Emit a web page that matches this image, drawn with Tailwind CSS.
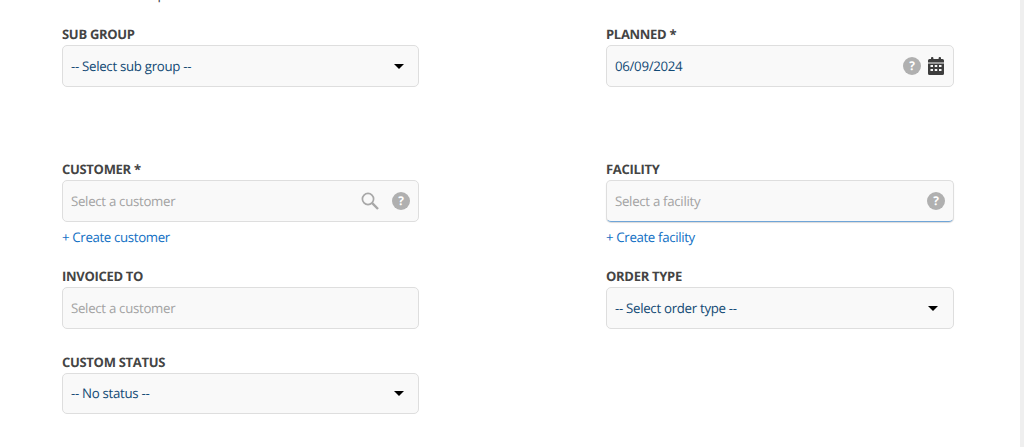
<!DOCTYPE html>
<html lang="en">
<head>
  <meta charset="UTF-8" />
  <title>Order form</title>
  <script src="https://cdn.jsdelivr.net/npm/@tailwindcss/browser@4"></script>
</head>
<body class="bg-white">
  <div class="h-[447px] overflow-hidden flex font-['Open_Sans',sans-serif] [text-rendering:geometricPrecision]">
    <main class="flex-1 pl-[62px]">
      <!-- Text cut off by the top of the window -->
      <p class="-mt-[16px] h-[20px] text-[13.5px] tracking-[-0.3px] leading-[20px] text-[#3d3d3d]">Create new template</p>

      <form class="grid grid-cols-[357px_348px] gap-x-[187px] pt-[20px]">
        <!-- Sub group / planned -->
        <div class="h-[135px]">
          <label class="block h-[21px] text-[13px] tracking-[-0.3px] leading-[20px] font-bold text-[#444444]">SUB GROUP</label>
          <div class="h-[42px] flex items-center justify-between pl-[8px] pr-[14px] bg-[#f9f9f9] border border-[#dedede] rounded-[5px] text-[13.25px] tracking-[-0.3px] text-[#124a75]">
            <span class="pt-[1px]">-- Select sub group --</span>
            <span class="w-0 h-0 border-x-[5px] border-x-transparent border-t-[5px] border-t-black"></span>
          </div>
        </div>
        <div class="h-[135px]">
          <label class="block h-[21px] text-[13px] tracking-[-0.3px] leading-[20px] font-bold text-[#444444]">PLANNED *</label>
          <div class="h-[42px] flex items-center pl-[8px] pr-[9px] bg-[#f9f9f9] border border-[#dedede] rounded-[5px] text-[13.25px] tracking-[-0.3px] text-[#124a75]">
            <span class="flex-1 pt-[1px]">06/09/2024</span>
            <span class="w-[18px] h-[18px] rounded-full bg-[#b0b0b0] text-white text-[12px] leading-[18px] font-bold text-center">?</span>
            <svg class="ml-[7px] w-[16px] h-[18px]" viewBox="0 0 16 18" fill="#3d3d3d">
              <rect x="3" y="0" width="2.4" height="4" rx="1" />
              <rect x="10.6" y="0" width="2.4" height="4" rx="1" />
              <path d="M1.5 2h13a1.500 1.500 0 0 1 1.500 1.500V5.500H0V3.500A1.500 1.500 0 0 1 1.500 2z" />
              <path fill-rule="evenodd" d="M0 6.500h16v10a1.500 1.500 0 0 1-1.500 1.500h-13A1.500 1.500 0 0 1 0 16.500zM2.500 8v2h2.500V8zM6.750 8v2h2.500V8zM11 8v2h2.500V8zM2.500 12v2h2.500v-2zM6.750 12v2h2.500v-2zM11 12v2h2.500v-2z" />
            </svg>
          </div>
        </div>

        <!-- Customer / facility -->
        <div class="h-[107px]">
          <label class="block h-[21px] text-[13px] tracking-[-0.3px] leading-[20px] font-bold text-[#444444]">CUSTOMER *</label>
          <div class="h-[42px] flex items-center pl-[8px] pr-[8px] bg-[#f9f9f9] border border-[#dedede] rounded-[5px] text-[13.25px] tracking-[-0.3px] text-[#a3a3a3]">
            <span class="flex-1 pt-[1px]">Select a customer</span>
            <svg class="mr-[13px] w-[18px] h-[18px]" viewBox="0 0 18 18" fill="none" stroke="#a8a8a8">
              <circle cx="7" cy="7" r="5.600" stroke-width="1.700" />
              <path d="M11.200 11.200 17 17" stroke-width="2.400" />
            </svg>
            <span class="w-[18px] h-[18px] rounded-full bg-[#b0b0b0] text-white text-[12px] leading-[18px] font-bold text-center">?</span>
          </div>
          <a class="block mt-[5px] text-[13.25px] tracking-[-0.35px] leading-[20px] text-[#1270c4]">+ Create customer</a>
        </div>
        <div class="h-[107px]">
          <label class="block h-[21px] text-[13px] tracking-[-0.3px] leading-[20px] font-bold text-[#444444]">FACILITY</label>
          <div class="h-[42px] flex items-center pl-[8px] pr-[8px] bg-[#f9f9f9] border border-[#dedede] border-b-[#6fa5d8] rounded-[5px] shadow-[0_1px_1px_rgba(0,0,0,0.15)] text-[13.25px] tracking-[-0.3px] text-[#a3a3a3]">
            <span class="flex-1 pt-[1px]">Select a facility</span>
            <span class="w-[18px] h-[18px] rounded-full bg-[#b0b0b0] text-white text-[12px] leading-[18px] font-bold text-center">?</span>
          </div>
          <a class="block mt-[5px] text-[13.25px] tracking-[-0.35px] leading-[20px] text-[#1270c4]">+ Create facility</a>
        </div>

        <!-- Invoiced to / order type -->
        <div class="h-[86px]">
          <label class="block h-[21px] text-[13px] tracking-[-0.3px] leading-[20px] font-bold text-[#444444]">INVOICED TO</label>
          <div class="h-[42px] flex items-center pl-[8px] pr-[9px] bg-[#f9f9f9] border border-[#dedede] rounded-[5px] text-[13.25px] tracking-[-0.3px] text-[#a3a3a3]">
            <span class="pt-[1px]">Select a customer</span>
          </div>
        </div>
        <div class="h-[86px]">
          <label class="block h-[21px] text-[13px] tracking-[-0.3px] leading-[20px] font-bold text-[#444444]">ORDER TYPE</label>
          <div class="h-[42px] flex items-center justify-between pl-[8px] pr-[15px] bg-[#f9f9f9] border border-[#dedede] rounded-[5px] text-[13.25px] tracking-[-0.3px] text-[#124a75]">
            <span class="pt-[1px]">-- Select order type --</span>
            <span class="w-0 h-0 border-x-[5px] border-x-transparent border-t-[5px] border-t-black"></span>
          </div>
        </div>

        <!-- Custom status -->
        <div>
          <label class="block h-[21px] text-[13px] tracking-[-0.3px] leading-[20px] font-bold text-[#444444]">CUSTOM STATUS</label>
          <div class="h-[41px] flex items-center justify-between pl-[8px] pr-[14px] bg-[#f9f9f9] border border-[#dedede] rounded-[5px] text-[13.25px] tracking-[-0.3px] text-[#124a75]">
            <span class="pt-[1px]">-- No status --</span>
            <span class="w-0 h-0 border-x-[5px] border-x-transparent border-t-[5px] border-t-black"></span>
          </div>
        </div>
      </form>
    </main>
    <!-- Scrollbar track -->
    <div class="w-[4px] bg-[#efefef]"></div>
  </div>
</body>
</html>
